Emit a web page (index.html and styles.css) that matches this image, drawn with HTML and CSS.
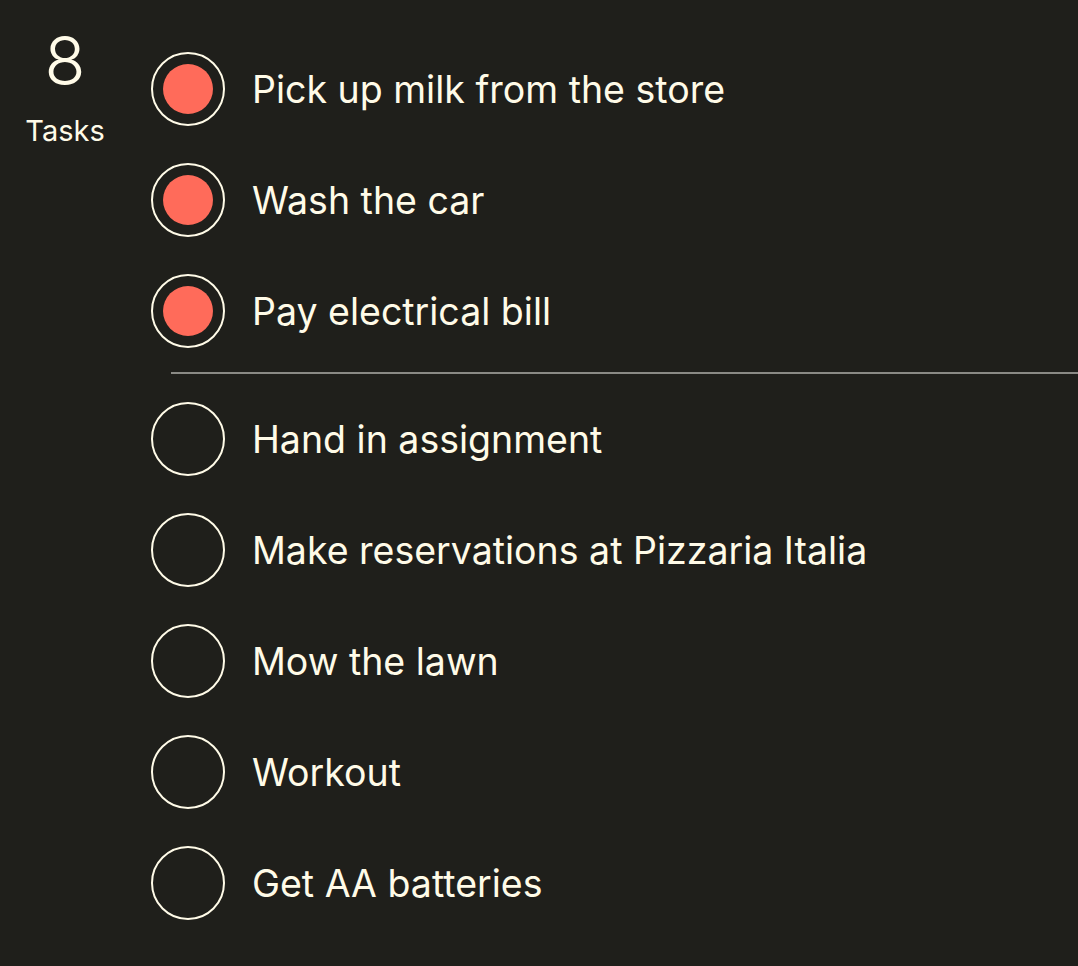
FILE: index.html
```html
<!DOCTYPE html>
<html>
<head>
<meta charset="utf-8">
<link rel="stylesheet" href="styles.css">
</head>
<body>
<div class="app">
  <div class="summary">
    <div class="count">8</div>
    <div class="label">Tasks</div>
  </div>
  <div class="lists">
    <ul class="tasks">
      <li class="task done"><span class="check"></span><span class="title">Pick up milk from the store</span></li>
      <li class="task done"><span class="check"></span><span class="title">Wash the car</span></li>
      <li class="task done"><span class="check"></span><span class="title">Pay electrical bill</span></li>
    </ul>
    <div class="divider"></div>
    <ul class="tasks">
      <li class="task"><span class="check"></span><span class="title">Hand in assignment</span></li>
      <li class="task"><span class="check"></span><span class="title">Make reservations at Pizzaria Italia</span></li>
      <li class="task"><span class="check"></span><span class="title">Mow the lawn</span></li>
      <li class="task"><span class="check"></span><span class="title">Workout</span></li>
      <li class="task"><span class="check"></span><span class="title">Get AA batteries</span></li>
    </ul>
  </div>
</div>
</body>
</html>
```
FILE: styles.css
```css
html, body {
  margin: 0;
  padding: 0;
  background: #1f1f1b;
  height: 100%;
}
body {
  font-family: Inter, "Noto Sans", sans-serif;
  color: #fffbe8;
  overflow: hidden;
}
.app {
  display: flex;
  padding-top: 27px;
}
.summary {
  width: 130px;
  display: flex;
  flex-direction: column;
  align-items: center;
  flex-shrink: 0;
}
.count {
  font-size: 67px;
  line-height: 67px;
  font-weight: 300;
}
.label {
  font-size: 29px;
  line-height: 36px;
  margin-top: 19px;
}
.lists {
  flex: 1;
  padding-top: 25px;
}
.tasks {
  list-style: none;
  margin: 0;
  padding: 0 0 0 21px;
  display: flex;
  flex-direction: column;
  gap: 37px;
}
.task {
  display: flex;
  align-items: center;
  height: 74px;
  gap: 27px;
}
.check {
  width: 70px;
  height: 70px;
  border: 2px solid #fffbe8;
  border-radius: 50%;
  display: flex;
  align-items: center;
  justify-content: center;
  flex-shrink: 0;
}
.done .check::after {
  content: "";
  width: 50px;
  height: 50px;
  border-radius: 50%;
  background: #ff6b5a;
}
.title {
  font-size: 37.5px;
  line-height: 44px;
  padding-top: 2px;
}
.divider {
  height: 2px;
  background: #8a8a85;
  margin: 24px 0 28px 41px;
}
```
